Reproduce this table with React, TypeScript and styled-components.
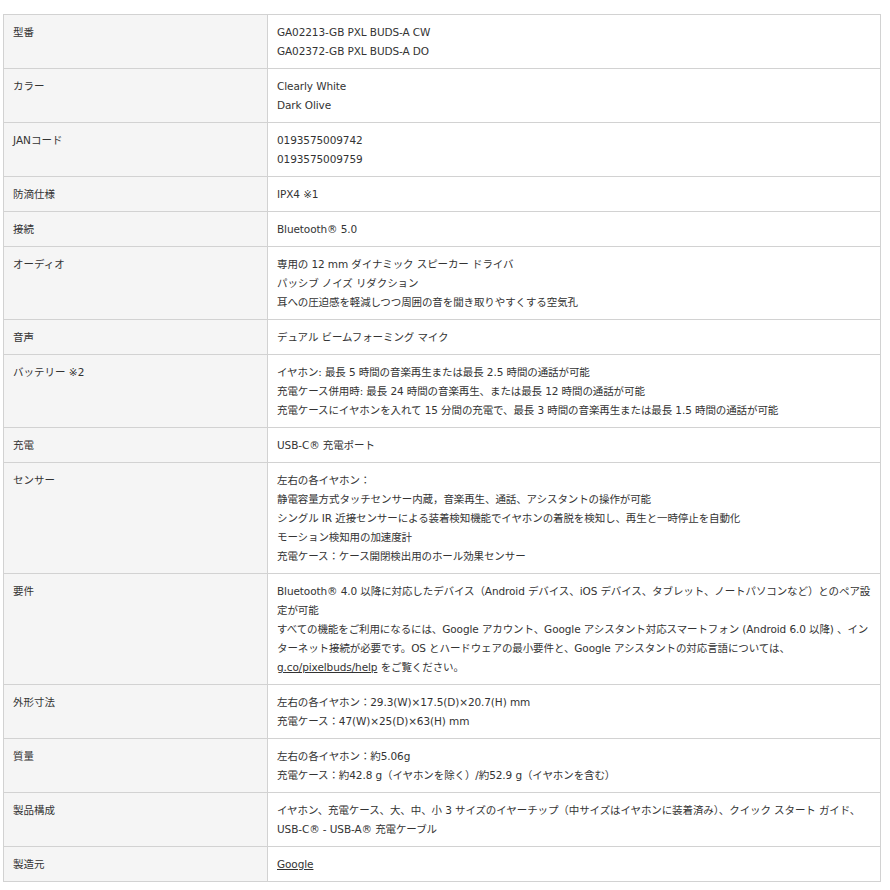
import * as React from "react"
import styled, { createGlobalStyle } from "styled-components"

const GlobalStyle = createGlobalStyle`
  body {
    margin: 0;
    background: #fff;
    font-family: "DejaVu Sans", "Noto Sans CJK JP", sans-serif;
    color: #333;
  }
`

const Page = styled.div`
  padding: 14px 9px 0 3px;
`

const SpecTable = styled.table`
  width: 878px;
  border-collapse: collapse;
  table-layout: fixed;
  font-size: 10.5px;
  line-height: 19px;
`

const Label = styled.th`
  background: #f5f5f5;
  border: 1px solid #d2d2d2;
  padding: 8px 9px 7px;
  text-align: left;
  vertical-align: top;
  font-weight: normal;
`

const Value = styled.td`
  background: #fff;
  border: 1px solid #d2d2d2;
  padding: 8px 5px 7px 9px;
  vertical-align: top;
  letter-spacing: -0.1px;
`

const Line = styled.div``

const Link = styled.a`
  color: #333;
  text-decoration: underline;
`

interface SpecRow {
  label: string
  lines: React.ReactNode[]
}

const specs: SpecRow[] = [
  { label: "型番", lines: ["GA02213-GB PXL BUDS-A CW", "GA02372-GB PXL BUDS-A DO"] },
  { label: "カラー", lines: ["Clearly White", "Dark Olive"] },
  { label: "JANコード", lines: ["0193575009742", "0193575009759"] },
  { label: "防滴仕様", lines: ["IPX4 ※1"] },
  { label: "接続", lines: ["Bluetooth® 5.0"] },
  {
    label: "オーディオ",
    lines: [
      "専用の 12 mm ダイナミック スピーカー ドライバ",
      "パッシブ ノイズ リダクション",
      "耳への圧迫感を軽減しつつ周囲の音を聞き取りやすくする空気孔",
    ],
  },
  { label: "音声", lines: ["デュアル ビームフォーミング マイク"] },
  {
    label: "バッテリー ※2",
    lines: [
      "イヤホン: 最長 5 時間の音楽再生または最長 2.5 時間の通話が可能",
      "充電ケース併用時: 最長 24 時間の音楽再生、または最長 12 時間の通話が可能",
      "充電ケースにイヤホンを入れて 15 分間の充電で、最長 3 時間の音楽再生または最長 1.5 時間の通話が可能",
    ],
  },
  { label: "充電", lines: ["USB-C® 充電ポート"] },
  {
    label: "センサー",
    lines: [
      "左右の各イヤホン：",
      "静電容量方式タッチセンサー内蔵，音楽再生、通話、アシスタントの操作が可能",
      "シングル IR 近接センサーによる装着検知機能でイヤホンの着脱を検知し、再生と一時停止を自動化",
      "モーション検知用の加速度計",
      "充電ケース：ケース開閉検出用のホール効果センサー",
    ],
  },
  {
    label: "要件",
    lines: [
      "Bluetooth® 4.0 以降に対応したデバイス（Android デバイス、iOS デバイス、タブレット、ノートパソコンなど）とのペア設定が可能",
      <>
        すべての機能をご利用になるには、Google アカウント、Google アシスタント対応スマートフォン (Android 6.0 以降) 、インターネット接続が必要です。OS とハードウェアの最小要件と、Google アシスタントの対応言語については、
        <br />
        <Link href="#">g.co/pixelbuds/help</Link> をご覧ください。
      </>,
    ],
  },
  {
    label: "外形寸法",
    lines: ["左右の各イヤホン：29.3(W)×17.5(D)×20.7(H) mm", "充電ケース：47(W)×25(D)×63(H) mm"],
  },
  {
    label: "質量",
    lines: ["左右の各イヤホン：約5.06g", "充電ケース：約42.8 g（イヤホンを除く）/約52.9 g（イヤホンを含む）"],
  },
  {
    label: "製品構成",
    lines: [
      "イヤホン、充電ケース、大、中、小 3 サイズのイヤーチップ（中サイズはイヤホンに装着済み）、クイック スタート ガイド、USB-C® - USB-A® 充電ケーブル",
    ],
  },
  { label: "製造元", lines: [<Link href="#">Google</Link>] },
]

export default function App(): React.ReactElement {
  return (
    <>
      <GlobalStyle />
      <Page>
        <SpecTable>
          <colgroup>
            <col style={{ width: 264 }} />
            <col />
          </colgroup>
          <tbody>
            {specs.map(row => (
              <tr key={row.label}>
                <Label>{row.label}</Label>
                <Value>
                  {row.lines.map((line, i) => (
                    <Line key={i}>{line}</Line>
                  ))}
                </Value>
              </tr>
            ))}
          </tbody>
        </SpecTable>
      </Page>
    </>
  )
}
